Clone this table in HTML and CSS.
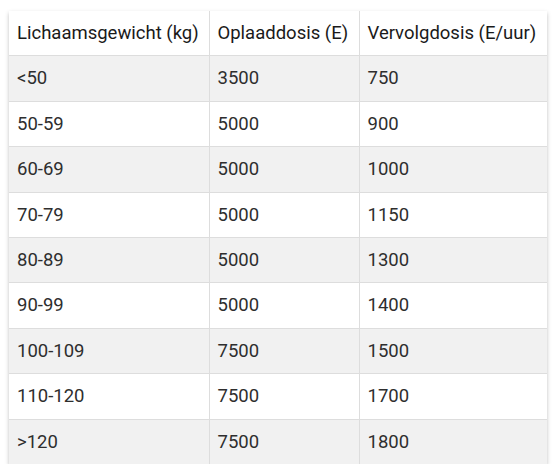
FILE: index.html
```html
<!DOCTYPE html>
<html lang="nl">
<head>
<meta charset="utf-8">
<link rel="stylesheet" href="styles.css">
</head>
<body>
<table class="dose-table">
  <thead>
    <tr><th>Lichaamsgewicht (kg)</th><th>Oplaaddosis (E)</th><th>Vervolgdosis (E/uur)</th></tr>
  </thead>
  <tbody>
    <tr><td>&lt;50</td><td>3500</td><td>750</td></tr>
    <tr><td>50-59</td><td>5000</td><td>900</td></tr>
    <tr><td>60-69</td><td>5000</td><td>1000</td></tr>
    <tr><td>70-79</td><td>5000</td><td>1150</td></tr>
    <tr><td>80-89</td><td>5000</td><td>1300</td></tr>
    <tr><td>90-99</td><td>5000</td><td>1400</td></tr>
    <tr><td>100-109</td><td>7500</td><td>1500</td></tr>
    <tr><td>110-120</td><td>7500</td><td>1700</td></tr>
    <tr><td>&gt;120</td><td>7500</td><td>1800</td></tr>
  </tbody>
</table>
</body>
</html>
```
FILE: styles.css
```css
html, body {
  margin: 0;
  padding: 0;
  background: #ffffff;
}
body {
  padding: 11px 8px 0 9px;
  font-family: Roboto, "Liberation Sans", sans-serif;
}
.dose-table {
  width: 538px;
  border-collapse: collapse;
  box-shadow: 0 2px 4px rgba(0, 0, 0, 0.25);
  background: #fff;
  table-layout: fixed;
}
.dose-table th,
.dose-table td {
  box-sizing: border-box;
  text-align: left;
  font-size: 18.5px;
  line-height: 20.4px;
  padding: 12px 8px 12px;
  border-left: 1px solid #dddddd;
  border-top: 1px solid #dddddd;
  white-space: nowrap;
}
.dose-table th:first-child,
.dose-table td:first-child {
  border-left: none;
  width: 200px;
}
.dose-table th:nth-child(2),
.dose-table td:nth-child(2) {
  width: 150px;
}
.dose-table thead tr th {
  border-top: none;
  font-weight: 400;
  color: #1a1a1a;
}
.dose-table td {
  color: #2e2e2e;
}
.dose-table tbody tr:nth-child(odd) {
  background: #f1f1f1;
}
```
